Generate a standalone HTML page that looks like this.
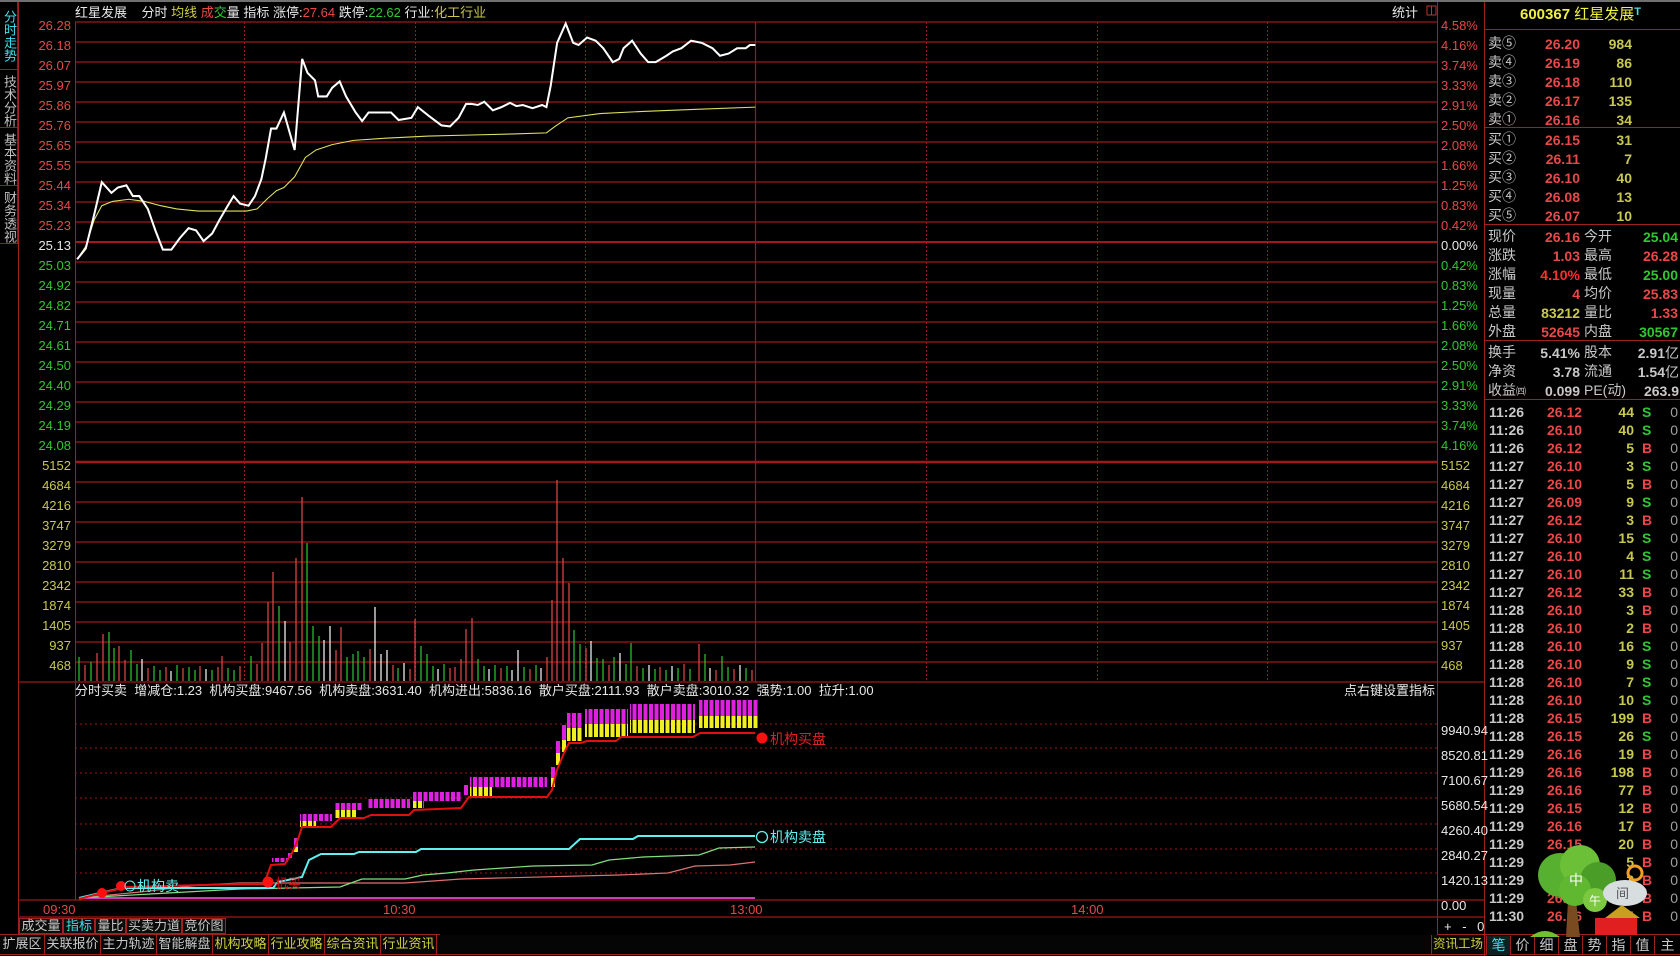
<!DOCTYPE html>
<html><head><meta charset="utf-8">
<style>
*{margin:0;padding:0;box-sizing:border-box}
body{width:1680px;height:956px;background:#000;overflow:hidden;position:relative;font-family:"Liberation Sans","Noto Sans CJK SC",sans-serif;color:#c8c8c8}
.t{position:absolute;white-space:nowrap;line-height:1}
.s13{font-size:13px}
.r{color:#e84848}.g{color:#30c830}.y{color:#d0d040}.w{color:#e8e8e8}.c{color:#40e0e8}.yl{color:#c8c850}
.ra{text-align:right}
.side{position:absolute;left:0;width:18px;writing-mode:vertical-rl;font-size:13px;line-height:16px;color:#c0c0c0;border-bottom:1px solid #703030;border-right:1px solid #802020;padding-top:5px;white-space:nowrap;overflow:hidden}
.ob{position:absolute;font-size:14px;line-height:1;white-space:nowrap}
.b{font-weight:bold}
.tab{position:absolute;top:918px;height:16px;border:1px solid #a02020;background:#0c0c0c;font-size:13px;line-height:14px;text-align:center;color:#c8c8c8;white-space:nowrap}
.bb{position:absolute;top:935px;height:19px;border-right:1px solid #a02020;background:#080808;font-size:13px;line-height:18px;text-align:center;color:#c8c8c8;white-space:nowrap;overflow:hidden}
.rt{position:absolute;top:936px;height:19px;width:24px;border-left:1px solid #a02020;font-size:14px;line-height:18px;text-align:center;color:#c8c8c8}
</style></head><body>
<div style="position:absolute;left:0;top:0;width:1680px;height:2px;background:#707070"></div>

<div class="side" style="top:2px;height:68px;color:#40e0e8;padding-top:8px">分时走势</div>
<div class="side" style="top:70px;height:58px">技术分析</div>
<div class="side" style="top:128px;height:58px">基本资料</div>
<div class="side" style="top:186px;height:58px">财务透视</div>

<svg style="position:absolute;left:0;top:0" width="1680" height="956">
<defs>
<pattern id="mg" width="5.5" height="10" patternUnits="userSpaceOnUse"><rect x="0" y="0" width="4" height="10" fill="#e020e0"/></pattern>
<pattern id="yw" width="5.5" height="10" patternUnits="userSpaceOnUse"><rect x="0" y="0" width="4" height="10" fill="#f0f020"/></pattern>
</defs>
<line x1="18.5" y1="2" x2="18.5" y2="934" stroke="#a02020"/>
<line x1="75.5" y1="22" x2="75.5" y2="900" stroke="#a02020"/>
<line x1="1437.5" y1="2" x2="1437.5" y2="934" stroke="#a02020"/>
<line x1="1484.5" y1="2" x2="1484.5" y2="956" stroke="#a02020"/>
<g stroke="#a01818" stroke-width="1.3">
<line x1="75" y1="22" x2="1437" y2="22"/><line x1="75" y1="42" x2="1437" y2="42"/><line x1="75" y1="62" x2="1437" y2="62"/><line x1="75" y1="82" x2="1437" y2="82"/><line x1="75" y1="102" x2="1437" y2="102"/><line x1="75" y1="122" x2="1437" y2="122"/><line x1="75" y1="142" x2="1437" y2="142"/><line x1="75" y1="162" x2="1437" y2="162"/><line x1="75" y1="182" x2="1437" y2="182"/><line x1="75" y1="202" x2="1437" y2="202"/><line x1="75" y1="222" x2="1437" y2="222"/><line x1="75" y1="242" x2="1437" y2="242" stroke-width="2"/><line x1="75" y1="262" x2="1437" y2="262"/><line x1="75" y1="282" x2="1437" y2="282"/><line x1="75" y1="302" x2="1437" y2="302"/><line x1="75" y1="322" x2="1437" y2="322"/><line x1="75" y1="342" x2="1437" y2="342"/><line x1="75" y1="362" x2="1437" y2="362"/><line x1="75" y1="382" x2="1437" y2="382"/><line x1="75" y1="402" x2="1437" y2="402"/><line x1="75" y1="422" x2="1437" y2="422"/><line x1="75" y1="442" x2="1437" y2="442"/>
<line x1="75" y1="462" x2="1437" y2="462" stroke-width="2.5"/>
<line x1="75" y1="482" x2="1437" y2="482"/><line x1="75" y1="502" x2="1437" y2="502"/><line x1="75" y1="522" x2="1437" y2="522"/><line x1="75" y1="542" x2="1437" y2="542"/><line x1="75" y1="562" x2="1437" y2="562"/><line x1="75" y1="582" x2="1437" y2="582"/><line x1="75" y1="602" x2="1437" y2="602"/><line x1="75" y1="622" x2="1437" y2="622"/><line x1="75" y1="642" x2="1437" y2="642"/><line x1="75" y1="662" x2="1437" y2="662"/>
<line x1="18" y1="682" x2="1484" y2="682"/>
<line x1="18" y1="900" x2="1484" y2="900"/>
<line x1="18" y1="917" x2="1484" y2="917"/>
</g>
<g stroke="#a01818" stroke-dasharray="2,2">
<line x1="244.5" y1="22" x2="244.5" y2="682"/><line x1="415.5" y1="22" x2="415.5" y2="682"/><line x1="585.5" y1="22" x2="585.5" y2="682"/>
<line x1="926.5" y1="22" x2="926.5" y2="682"/><line x1="1097.5" y1="22" x2="1097.5" y2="682"/><line x1="1267.5" y1="22" x2="1267.5" y2="682"/>
</g>
<line x1="755.5" y1="22" x2="755.5" y2="682" stroke="#a01818" stroke-width="1.2"/>
<g stroke="#a01818" stroke-dasharray="2,3">
<line x1="75" y1="724" x2="1437" y2="724"/><line x1="75" y1="748" x2="1437" y2="748"/><line x1="75" y1="773" x2="1437" y2="773"/><line x1="75" y1="798" x2="1437" y2="798"/><line x1="75" y1="824" x2="1437" y2="824"/><line x1="75" y1="849" x2="1437" y2="849"/><line x1="75" y1="873" x2="1437" y2="873"/>
</g>

<g transform="scale(1.0714)" fill="none">
<polyline stroke="#e0e060" stroke-width="1" points="72,242 80,230 88,205 95,192 105,188 120,186 135,188 150,192 165,195 185,197 200,197 215,197 230,197 240,195 250,185 258,178 265,175 275,165 285,147 295,140 310,135 330,131 360,129 400,127 440,126 480,125 510,124 518,118 530,110 560,106 600,104 650,102 705,100"/>
<polyline stroke="#ffffff" stroke-width="1.9" points="72,242 80,232 88,200 95,170 104,180 110,175 118,173 124,183 130,183 138,195 145,215 152,233 160,233 168,222 176,213 183,215 190,225 198,218 205,205 212,193 218,183 224,190 232,192 238,183 244,167 248,148 253,120 258,120 265,105 275,140 282,55 287,68 294,75 297,90 305,90 310,82 317,76 323,90 332,105 338,113 344,105 352,105 365,105 372,112 384,110 390,100 400,108 412,117 420,118 428,110 435,97 440,97 446,98 452,95 460,103 468,100 476,96 482,99 488,98 497,101 506,98 510,100 514,80 520,40 528,22 535,40 540,42 548,35 556,38 563,45 572,58 578,55 582,45 590,38 598,50 605,58 612,58 622,52 628,48 636,45 645,38 655,40 665,45 672,52 680,50 688,45 696,45 700,42 705,42"/>
</g>

<g stroke-width="1.2">
<line x1="79" y1="681" x2="79" y2="657" stroke="#30c830"/>
<line x1="85" y1="681" x2="85" y2="665" stroke="#e84848"/>
<line x1="91" y1="681" x2="91" y2="662" stroke="#30c830"/>
<line x1="97" y1="681" x2="97" y2="653" stroke="#e84848"/>
<line x1="103" y1="681" x2="103" y2="634" stroke="#e84848"/>
<line x1="109" y1="681" x2="109" y2="632" stroke="#30c830"/>
<line x1="114" y1="681" x2="114" y2="648" stroke="#30c830"/>
<line x1="119" y1="681" x2="119" y2="646" stroke="#e84848"/>
<line x1="125" y1="681" x2="125" y2="660" stroke="#e84848"/>
<line x1="131" y1="681" x2="131" y2="650" stroke="#30c830"/>
<line x1="137" y1="681" x2="137" y2="664" stroke="#30c830"/>
<line x1="142" y1="681" x2="142" y2="659" stroke="#ffffff"/>
<line x1="148" y1="681" x2="148" y2="668" stroke="#e84848"/>
<line x1="154" y1="681" x2="154" y2="666" stroke="#30c830"/>
<line x1="160" y1="681" x2="160" y2="670" stroke="#30c830"/>
<line x1="166" y1="681" x2="166" y2="667" stroke="#e84848"/>
<line x1="171" y1="681" x2="171" y2="671" stroke="#ffffff"/>
<line x1="177" y1="681" x2="177" y2="665" stroke="#30c830"/>
<line x1="183" y1="681" x2="183" y2="668" stroke="#e84848"/>
<line x1="189" y1="681" x2="189" y2="667" stroke="#30c830"/>
<line x1="195" y1="681" x2="195" y2="670" stroke="#30c830"/>
<line x1="200" y1="681" x2="200" y2="666" stroke="#e84848"/>
<line x1="206" y1="681" x2="206" y2="669" stroke="#ffffff"/>
<line x1="212" y1="681" x2="212" y2="670" stroke="#30c830"/>
<line x1="218" y1="681" x2="218" y2="667" stroke="#e84848"/>
<line x1="222" y1="681" x2="222" y2="656" stroke="#e84848"/>
<line x1="228" y1="681" x2="228" y2="668" stroke="#30c830"/>
<line x1="234" y1="681" x2="234" y2="670" stroke="#30c830"/>
<line x1="240" y1="681" x2="240" y2="666" stroke="#e84848"/>
<line x1="251" y1="681" x2="251" y2="656" stroke="#30c830"/>
<line x1="257" y1="681" x2="257" y2="664" stroke="#e84848"/>
<line x1="262" y1="681" x2="262" y2="643" stroke="#e84848"/>
<line x1="268" y1="681" x2="268" y2="602" stroke="#e84848"/>
<line x1="273" y1="681" x2="273" y2="572" stroke="#e84848"/>
<line x1="279" y1="681" x2="279" y2="606" stroke="#30c830"/>
<line x1="285" y1="681" x2="285" y2="621" stroke="#ffffff"/>
<line x1="290" y1="681" x2="290" y2="642" stroke="#e84848"/>
<line x1="296" y1="681" x2="296" y2="558" stroke="#e84848"/>
<line x1="302" y1="681" x2="302" y2="497" stroke="#e84848"/>
<line x1="307" y1="681" x2="307" y2="543" stroke="#30c830"/>
<line x1="313" y1="681" x2="313" y2="626" stroke="#30c830"/>
<line x1="319" y1="681" x2="319" y2="636" stroke="#30c830"/>
<line x1="324" y1="681" x2="324" y2="640" stroke="#ffffff"/>
<line x1="330" y1="681" x2="330" y2="626" stroke="#ffffff"/>
<line x1="336" y1="681" x2="336" y2="650" stroke="#e84848"/>
<line x1="341" y1="681" x2="341" y2="627" stroke="#e84848"/>
<line x1="347" y1="681" x2="347" y2="657" stroke="#30c830"/>
<line x1="353" y1="681" x2="353" y2="654" stroke="#30c830"/>
<line x1="358" y1="681" x2="358" y2="651" stroke="#30c830"/>
<line x1="364" y1="681" x2="364" y2="657" stroke="#30c830"/>
<line x1="370" y1="681" x2="370" y2="649" stroke="#e84848"/>
<line x1="375" y1="681" x2="375" y2="607" stroke="#ffffff"/>
<line x1="381" y1="681" x2="381" y2="654" stroke="#ffffff"/>
<line x1="387" y1="681" x2="387" y2="650" stroke="#ffffff"/>
<line x1="393" y1="681" x2="393" y2="665" stroke="#e84848"/>
<line x1="398" y1="681" x2="398" y2="668" stroke="#30c830"/>
<line x1="404" y1="681" x2="404" y2="663" stroke="#ffffff"/>
<line x1="410" y1="681" x2="410" y2="669" stroke="#e84848"/>
<line x1="415" y1="681" x2="415" y2="619" stroke="#e84848"/>
<line x1="421" y1="681" x2="421" y2="646" stroke="#30c830"/>
<line x1="427" y1="681" x2="427" y2="654" stroke="#30c830"/>
<line x1="433" y1="681" x2="433" y2="666" stroke="#30c830"/>
<line x1="438" y1="681" x2="438" y2="669" stroke="#ffffff"/>
<line x1="444" y1="681" x2="444" y2="664" stroke="#30c830"/>
<line x1="450" y1="681" x2="450" y2="668" stroke="#e84848"/>
<line x1="455" y1="681" x2="455" y2="667" stroke="#e84848"/>
<line x1="461" y1="681" x2="461" y2="659" stroke="#e84848"/>
<line x1="466" y1="681" x2="466" y2="629" stroke="#e84848"/>
<line x1="472" y1="681" x2="472" y2="618" stroke="#e84848"/>
<line x1="478" y1="681" x2="478" y2="659" stroke="#30c830"/>
<line x1="484" y1="681" x2="484" y2="666" stroke="#30c830"/>
<line x1="489" y1="681" x2="489" y2="669" stroke="#ffffff"/>
<line x1="495" y1="681" x2="495" y2="665" stroke="#30c830"/>
<line x1="501" y1="681" x2="501" y2="668" stroke="#e84848"/>
<line x1="507" y1="681" x2="507" y2="666" stroke="#30c830"/>
<line x1="512" y1="681" x2="512" y2="670" stroke="#ffffff"/>
<line x1="518" y1="681" x2="518" y2="650" stroke="#ffffff"/>
<line x1="524" y1="681" x2="524" y2="667" stroke="#30c830"/>
<line x1="530" y1="681" x2="530" y2="669" stroke="#e84848"/>
<line x1="536" y1="681" x2="536" y2="665" stroke="#30c830"/>
<line x1="541" y1="681" x2="541" y2="668" stroke="#ffffff"/>
<line x1="547" y1="681" x2="547" y2="657" stroke="#e84848"/>
<line x1="552" y1="681" x2="552" y2="600" stroke="#e84848"/>
<line x1="557" y1="681" x2="557" y2="480" stroke="#e84848"/>
<line x1="563" y1="681" x2="563" y2="558" stroke="#e84848"/>
<line x1="569" y1="681" x2="569" y2="583" stroke="#e84848"/>
<line x1="574" y1="681" x2="574" y2="630" stroke="#30c830"/>
<line x1="580" y1="681" x2="580" y2="644" stroke="#30c830"/>
<line x1="586" y1="681" x2="586" y2="648" stroke="#e84848"/>
<line x1="591" y1="681" x2="591" y2="641" stroke="#ffffff"/>
<line x1="597" y1="681" x2="597" y2="658" stroke="#30c830"/>
<line x1="603" y1="681" x2="603" y2="659" stroke="#30c830"/>
<line x1="609" y1="681" x2="609" y2="665" stroke="#e84848"/>
<line x1="614" y1="681" x2="614" y2="657" stroke="#30c830"/>
<line x1="620" y1="681" x2="620" y2="653" stroke="#ffffff"/>
<line x1="626" y1="681" x2="626" y2="664" stroke="#30c830"/>
<line x1="631" y1="681" x2="631" y2="643" stroke="#30c830"/>
<line x1="637" y1="681" x2="637" y2="666" stroke="#e84848"/>
<line x1="643" y1="681" x2="643" y2="668" stroke="#30c830"/>
<line x1="649" y1="681" x2="649" y2="665" stroke="#ffffff"/>
<line x1="655" y1="681" x2="655" y2="669" stroke="#30c830"/>
<line x1="660" y1="681" x2="660" y2="667" stroke="#e84848"/>
<line x1="666" y1="681" x2="666" y2="670" stroke="#30c830"/>
<line x1="672" y1="681" x2="672" y2="666" stroke="#ffffff"/>
<line x1="678" y1="681" x2="678" y2="668" stroke="#30c830"/>
<line x1="684" y1="681" x2="684" y2="664" stroke="#e84848"/>
<line x1="690" y1="681" x2="690" y2="669" stroke="#30c830"/>
<line x1="699" y1="681" x2="699" y2="644" stroke="#e84848"/>
<line x1="705" y1="681" x2="705" y2="654" stroke="#30c830"/>
<line x1="710" y1="681" x2="710" y2="668" stroke="#ffffff"/>
<line x1="716" y1="681" x2="716" y2="670" stroke="#e84848"/>
<line x1="722" y1="681" x2="722" y2="656" stroke="#30c830"/>
<line x1="728" y1="681" x2="728" y2="667" stroke="#30c830"/>
<line x1="734" y1="681" x2="734" y2="669" stroke="#e84848"/>
<line x1="740" y1="681" x2="740" y2="665" stroke="#ffffff"/>
<line x1="746" y1="681" x2="746" y2="668" stroke="#30c830"/>
<line x1="752" y1="681" x2="752" y2="670" stroke="#e84848"/>
</g>

<g>
<rect x="272" y="858" width="16" height="4" fill="url(#mg)"/>
<rect x="288" y="853" width="4" height="5" fill="#e020e0"/>
<rect x="294" y="838" width="4" height="9" fill="#e020e0"/><rect x="294" y="847" width="4" height="5" fill="#f0f020"/>
<rect x="300" y="814" width="32" height="7" fill="url(#mg)"/><rect x="300" y="821" width="16" height="6" fill="url(#yw)"/>
<rect x="334" y="803" width="29" height="7" fill="url(#mg)"/><rect x="334" y="810" width="22" height="8" fill="url(#yw)"/>
<rect x="368" y="799" width="42" height="9" fill="url(#mg)"/>
<rect x="413" y="792" width="49" height="9" fill="url(#mg)"/><rect x="413" y="801" width="11" height="7" fill="url(#yw)"/>
<rect x="464" y="785" width="4" height="10" fill="#e020e0"/>
<rect x="470" y="777" width="77" height="10" fill="url(#mg)"/><rect x="470" y="787" width="22" height="9" fill="url(#yw)"/>
<rect x="551" y="767" width="4" height="11" fill="#e020e0"/><rect x="551" y="778" width="4" height="9" fill="#f0f020"/>
<rect x="556" y="741" width="4" height="12" fill="#e020e0"/><rect x="556" y="753" width="4" height="12" fill="#f0f020"/>
<rect x="562" y="725" width="4" height="15" fill="#e020e0"/><rect x="562" y="740" width="4" height="12" fill="#f0f020"/>
<rect x="567" y="713" width="16" height="15" fill="url(#mg)"/><rect x="567" y="728" width="16" height="13" fill="url(#yw)"/>
<rect x="585" y="709" width="43" height="15" fill="url(#mg)"/><rect x="585" y="724" width="43" height="13" fill="url(#yw)"/>
<rect x="630" y="704" width="65" height="16" fill="url(#mg)"/><rect x="630" y="720" width="65" height="13" fill="url(#yw)"/>
<rect x="699" y="700" width="59" height="16" fill="url(#mg)"/><rect x="699" y="716" width="59" height="12" fill="url(#yw)"/>
</g>
<g fill="none">
<line x1="79" y1="898" x2="755" y2="898" stroke="#c040c0" stroke-width="2"/>
<polyline stroke="#e07070" stroke-width="1.2" points="79,898 140,892 200,885 240,883 405,883 461,879 619,875 668,873 695,866 730,865 755,862"/>
<polyline stroke="#80e080" stroke-width="1.2" points="79,898 150,894 240,889 340,887 362,879 405,879 423,875 447,873 474,870 533,866 592,865 609,860 643,857 699,855 719,848 755,847"/>
<polyline stroke="#60f0f0" stroke-width="2" points="79,898 100,893 122,888 265,888 273,888 278,882 302,877 309,860 321,854 354,854 359,852 416,852 421,849 569,849 580,839 633,839 638,836 755,836"/>
<polyline stroke="#e01010" stroke-width="2" points="79,899 102,893 127,887 240,884 264,884 271,865 285,864 292,853 297,842 302,827 331,827 340,818 364,818 371,815 409,815 414,810 461,808 469,797 547,797 552,790 557,770 564,753 569,743 581,743 587,741 616,741 621,737 693,737 700,733 755,733"/>
</g>
<circle cx="102" cy="893" r="5" fill="#ff1010"/>
<circle cx="121" cy="886" r="5" fill="#ff1010"/>
<circle cx="130" cy="886" r="5" fill="none" stroke="#60f0f0"/>
<circle cx="268" cy="882" r="5.5" fill="#ff1010"/>
<circle cx="762" cy="738" r="5.5" fill="#ff1010"/>
<circle cx="762" cy="837" r="5.5" fill="none" stroke="#60f0f0" stroke-width="1.3"/>
<text x="137" y="891" font-size="14" fill="#60f0f0" font-family="Liberation Sans,Noto Sans CJK SC,sans-serif">机构卖</text>
<text x="275" y="888" font-size="13" fill="#e01010" font-family="Liberation Sans,Noto Sans CJK SC,sans-serif">机买</text>
<text x="770" y="744" font-size="14" fill="#e02020" font-family="Liberation Sans,Noto Sans CJK SC,sans-serif">机构买盘</text>
<text x="770" y="842" font-size="14" fill="#60f0f0" font-family="Liberation Sans,Noto Sans CJK SC,sans-serif">机构卖盘</text>

<g stroke="#a02020">
<line x1="1485" y1="29.5" x2="1680" y2="29.5"/><line x1="1485" y1="127.5" x2="1680" y2="127.5"/><line x1="1485" y1="224.5" x2="1680" y2="224.5"/><line x1="1485" y1="340.5" x2="1680" y2="340.5"/><line x1="1485" y1="399.5" x2="1680" y2="399.5"/>
<line x1="1437" y1="934.5" x2="1680" y2="934.5"/>
<line x1="0" y1="934.5" x2="440" y2="934.5"/>
<line x1="0" y1="954.5" x2="1680" y2="954.5"/>
</g>
<rect x="1427" y="6" width="9" height="9" fill="none" stroke="#c03030"/><line x1="1431.5" y1="6" x2="1431.5" y2="15" stroke="#c03030"/>
</svg>

<div class="t s13 w" style="left:75px;top:6px">红星发展&nbsp;&nbsp;&nbsp;&nbsp;分时 <span class="y">均线</span> <span class="r">成</span><span class="g">交</span>量 指标 涨停:<span class="r">27.64</span> 跌停:<span class="g">22.62</span> 行业:<span class="yl">化工行业</span></div>
<div class="t s13 w" style="left:1392px;top:6px">统计</div>

<div class="t s13 r ra" style="left:20px;width:51px;top:16px;line-height:20px">26.28<br>26.18<br>26.07<br>25.97<br>25.86<br>25.76<br>25.65<br>25.55<br>25.44<br>25.34<br>25.23<br><span class="w">25.13</span><br><span class="g">25.03<br>24.92<br>24.82<br>24.71<br>24.61<br>24.50<br>24.40<br>24.29<br>24.19<br>24.08</span></div>
<div class="t s13 yl ra" style="left:20px;width:51px;top:456px;line-height:20px">5152<br>4684<br>4216<br>3747<br>3279<br>2810<br>2342<br>1874<br>1405<br>937<br>468</div>
<div class="t s13 r" style="left:1441px;top:16px;line-height:20px">4.58%<br>4.16%<br>3.74%<br>3.33%<br>2.91%<br>2.50%<br>2.08%<br>1.66%<br>1.25%<br>0.83%<br>0.42%<br><span class="w">0.00%</span><br><span class="g">0.42%<br>0.83%<br>1.25%<br>1.66%<br>2.08%<br>2.50%<br>2.91%<br>3.33%<br>3.74%<br>4.16%</span></div>
<div class="t s13 yl" style="left:1441px;top:456px;line-height:20px">5152<br>4684<br>4216<br>3747<br>3279<br>2810<br>2342<br>1874<br>1405<br>937<br>468</div>

<div class="t s13 w" style="left:75px;top:684px">分时买卖&nbsp; 增减仓:1.23&nbsp; 机构买盘:9467.56&nbsp; 机构卖盘:3631.40&nbsp; 机构进出:5836.16&nbsp; 散户买盘:2111.93&nbsp; 散户卖盘:3010.32&nbsp; 强势:1.00&nbsp; 拉升:1.00</div>
<div class="t s13 w ra" style="left:1300px;width:135px;top:684px">点右键设置指标</div>
<div class="t s13 w" style="left:1441px;top:718px;line-height:25px">9940.94<br>8520.81<br>7100.67<br>5680.54<br>4260.40<br>2840.27<br>1420.13<br>0.00</div>

<div class="t s13 r" style="left:43px;top:903px">09:30</div>
<div class="t s13 r" style="left:383px;top:903px">10:30</div>
<div class="t s13 r" style="left:730px;top:903px">13:00</div>
<div class="t s13 r" style="left:1071px;top:903px">14:00</div>

<div class="tab" style="left:19px;width:44px">成交量</div>
<div class="tab" style="left:63px;width:32px;color:#40e0e8">指标</div>
<div class="tab" style="left:95px;width:31px">量比</div>
<div class="tab" style="left:126px;width:56px">买卖力道</div>
<div class="tab" style="left:182px;width:44px">竞价图</div>
<div class="t s13 w" style="left:1444px;top:920px;word-spacing:7px">+ - 0</div>

<div class="bb" style="left:0;width:45px">扩展区</div>
<div class="bb" style="left:45px;width:56px">关联报价</div>
<div class="bb" style="left:101px;width:56px">主力轨迹</div>
<div class="bb" style="left:157px;width:56px">智能解盘</div>
<div class="bb" style="left:213px;width:56px;color:#d0d040">机构攻略</div>
<div class="bb" style="left:269px;width:56px;color:#d0d040">行业攻略</div>
<div class="bb" style="left:325px;width:56px;color:#d0d040">综合资讯</div>
<div class="bb" style="left:381px;width:56px;color:#d0d040">行业资讯</div>
<div class="bb" style="left:437px;width:995px;border-right:none;background:#050505"></div>
<div class="bb" style="left:1431px;width:54px;color:#d0d040;border-left:1px solid #a02020;font-size:12.5px">资讯工场</div>
<div class="rt" style="left:1486px;color:#40e0e8;background:#102020">笔</div>
<div class="rt" style="left:1510px">价</div>
<div class="rt" style="left:1534px">细</div>
<div class="rt" style="left:1558px">盘</div>
<div class="rt" style="left:1582px">势</div>
<div class="rt" style="left:1606px">指</div>
<div class="rt" style="left:1630px">值</div>
<div class="rt" style="left:1654px;width:26px">主</div>

<div class="t b" style="left:1520px;top:7px;font-size:15px;color:#f0f040">600367 <span style="font-weight:normal">红星发展</span><span class="c" style="font-size:11px;vertical-align:top">T</span></div>
<div class="ob" style="left:1488px;top:34px;line-height:19px;color:#c8c8c8">卖⑤<br>卖④<br>卖③<br>卖②<br>卖①</div>
<div class="ob b r ra" style="left:1520px;width:60px;top:35px;line-height:19px">26.20<br>26.19<br>26.18<br>26.17<br>26.16</div>
<div class="ob b yl ra" style="left:1590px;width:42px;top:35px;line-height:19px">984<br>86<br>110<br>135<br>34</div>
<div class="ob" style="left:1488px;top:130px;line-height:19px;color:#c8c8c8">买①<br>买②<br>买③<br>买④<br>买⑤</div>
<div class="ob b r ra" style="left:1520px;width:60px;top:131px;line-height:19px">26.15<br>26.11<br>26.10<br>26.08<br>26.07</div>
<div class="ob b yl ra" style="left:1590px;width:42px;top:131px;line-height:19px">31<br>7<br>40<br>13<br>10</div>
<div class="ob" style="left:1488px;top:227px;line-height:19px;color:#c8c8c8">现价<br>涨跌<br>涨幅<br>现量<br>总量<br>外盘</div>
<div class="ob b ra" style="left:1520px;width:60px;top:228px;line-height:19px"><span class="r">26.16</span><br><span class="r">1.03</span><br><span style="color:#ff3030">4.10%</span><br><span class="r">4</span><br><span class="yl">83212</span><br><span class="r">52645</span></div>
<div class="ob" style="left:1584px;top:227px;line-height:19px;color:#c8c8c8">今开<br>最高<br>最低<br>均价<br>量比<br>内盘</div>
<div class="ob b ra" style="left:1620px;width:58px;top:228px;line-height:19px"><span class="g">25.04</span><br><span class="r">26.28</span><br><span class="g">25.00</span><br><span class="r">25.83</span><br><span class="r">1.33</span><br><span class="g">30567</span></div>
<div class="ob" style="left:1488px;top:343px;line-height:19px;color:#c8c8c8">换手<br>净资<br>收益<span style="font-size:10px">㈣</span></div>
<div class="ob b ra" style="left:1520px;width:60px;top:344px;line-height:19px;color:#c8c8c8">5.41%<br>3.78<br>0.099</div>
<div class="ob" style="left:1584px;top:343px;line-height:19px;color:#c8c8c8">股本<br>流通<br>PE(动)</div>
<div class="ob b ra" style="left:1620px;width:59px;top:344px;line-height:19px;color:#c8c8c8">2.91<span style="font-weight:normal">亿</span><br>1.54<span style="font-weight:normal">亿</span><br>263.9</div>

<div class="ob b" style="left:1489px;top:403px;line-height:18px;color:#c8c8c8">11:26<br>11:26<br>11:26<br>11:27<br>11:27<br>11:27<br>11:27<br>11:27<br>11:27<br>11:27<br>11:27<br>11:28<br>11:28<br>11:28<br>11:28<br>11:28<br>11:28<br>11:28<br>11:28<br>11:29<br>11:29<br>11:29<br>11:29<br>11:29<br>11:29<br>11:29<br>11:29<br>11:29<br>11:30</div>
<div class="ob b r" style="left:1547px;top:403px;line-height:18px">26.12<br>26.10<br>26.12<br>26.10<br>26.10<br>26.09<br>26.12<br>26.10<br>26.10<br>26.10<br>26.12<br>26.10<br>26.10<br>26.10<br>26.10<br>26.10<br>26.10<br>26.15<br>26.15<br>26.16<br>26.16<br>26.16<br>26.15<br>26.16<br>26.15<br>26.16<br>26.16<br>26.16<br>26.16</div>
<div class="ob b yl ra" style="left:1600px;width:34px;top:403px;line-height:18px">44<br>40<br>5<br>3<br>5<br>9<br>3<br>15<br>4<br>11<br>33<br>3<br>2<br>16<br>9<br>7<br>10<br>199<br>26<br>19<br>198<br>77<br>12<br>17<br>20<br>5<br>3<br>8<br>4</div>
<div class="ob b" style="left:1642px;top:403px;line-height:18px"><span class="g">S</span><br><span class="g">S</span><br><span class="r">B</span><br><span class="g">S</span><br><span class="r">B</span><br><span class="g">S</span><br><span class="r">B</span><br><span class="g">S</span><br><span class="g">S</span><br><span class="g">S</span><br><span class="r">B</span><br><span class="r">B</span><br><span class="r">B</span><br><span class="g">S</span><br><span class="g">S</span><br><span class="g">S</span><br><span class="g">S</span><br><span class="r">B</span><br><span class="g">S</span><br><span class="r">B</span><br><span class="r">B</span><br><span class="r">B</span><br><span class="r">B</span><br><span class="r">B</span><br><span class="r">B</span><br><span class="r">B</span><br><span class="r">B</span><br><span class="r">B</span><br><span class="r">B</span></div>
<div class="ob ra" style="left:1660px;width:18px;top:403px;line-height:18px;color:#a0a0a0">0<br>0<br>0<br>0<br>0<br>0<br>0<br>0<br>0<br>0<br>0<br>0<br>0<br>0<br>0<br>0<br>0<br>0<br>0<br>0<br>0<br>0<br>0<br>0<br>0<br>0<br>0<br>0<br>0</div>

<svg style="position:absolute;left:1525px;top:845px" width="130" height="92">
<path d="M43 55 L41 92 L55 92 L51 55 Z" fill="#7a4a20"/>
<circle cx="35" cy="30" r="22" fill="#58b030"/>
<circle cx="55" cy="20" r="20" fill="#6cc038"/>
<circle cx="73" cy="35" r="18" fill="#4a9e28"/>
<circle cx="50" cy="45" r="16" fill="#60b830"/>
<circle cx="70" cy="55" r="12" fill="#7cc840"/>
<ellipse cx="100" cy="48" rx="22" ry="13" fill="#d8dde0"/>
<circle cx="110" cy="28" r="7" fill="none" stroke="#f0a020" stroke-width="3"/>
<rect x="70" y="73" width="42" height="17" fill="#e02020"/>
<path d="M80 73 L97 60 L115 73 Z" fill="#c8a020"/>
<path d="M5 92 Q20 80 35 92 Z" fill="#70c030"/>
<text x="44" y="40" font-size="14" fill="#fff" font-family="Liberation Sans,Noto Sans CJK SC,sans-serif">中</text>
<text x="64" y="60" font-size="12" fill="#fff" font-family="Liberation Sans,Noto Sans CJK SC,sans-serif">午</text>
<text x="91" y="53" font-size="13" fill="#555" font-family="Liberation Sans,Noto Sans CJK SC,sans-serif">间</text>
</svg>
</body></html>
